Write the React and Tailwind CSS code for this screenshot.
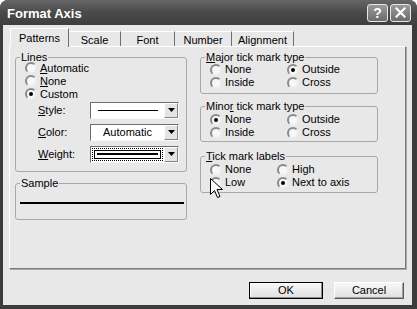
// App.jsx — Format Axis dialog (grayscale XP look)

const TABS = [
  { label: "Patterns", w: "w-[59px]", active: true },
  { label: "Scale", w: "w-[52px]" },
  { label: "Font", w: "w-[54px]" },
  { label: "Number", w: "w-[57px]" },
  { label: "Alignment", w: "w-[62px]" },
];

function Radio({ checked }) {
  return (
    <span className="w-[12px] h-[12px] rounded-full bg-[#f7f7f7] border-2 border-t-[#8a8a8a] border-l-[#8a8a8a] border-r-[#ececec] border-b-[#ececec] flex items-center justify-center shrink-0">
      {checked && <span className="w-[4px] h-[4px] rounded-full bg-black" />}
    </span>
  );
}

function Option({ checked, children, className = "" }) {
  return (
    <div className={`flex items-center gap-[3px] h-[13px] ${className}`}>
      <Radio checked={checked} />
      <span className="leading-[13px]">{children}</span>
    </div>
  );
}

function Group({ title, className = "", children }) {
  return (
    <fieldset className={`border border-[#a8a8a8] rounded-[3px] ${className}`}>
      <legend className="ml-[4px] px-[1px] leading-[13px]">{title}</legend>
      {children}
    </fieldset>
  );
}

function Dropdown({ children, focused }) {
  return (
    <div className="w-[89px] h-[17px] flex border border-t-[#6e6e6e] border-l-[#6e6e6e] border-r-[#fafafa] border-b-[#fafafa] bg-white">
      <div className="flex-1 flex items-center justify-center p-[1px]">
        <div
          className={`w-full h-full flex items-center justify-center ${
            focused ? "border border-dotted border-black p-[1px]" : ""
          }`}
        >
          {children}
        </div>
      </div>
      <div className="w-[14px] bg-[#e4e4e4] border border-t-[#fdfdfd] border-l-[#fdfdfd] border-r-[#858585] border-b-[#858585] flex items-center justify-center">
        <svg width="7" height="4" viewBox="0 0 7 4">
          <path d="M0 0h7L3.5 4z" fill="#000" />
        </svg>
      </div>
    </div>
  );
}

function TitleBar() {
  return (
    <div className="h-[25px] shrink-0 flex items-center pl-[7px] pr-[6px] bg-gradient-to-b from-[#666] via-[#4a4a4a] to-[#3e3e3e]">
      <span className="text-white font-bold text-[13px] leading-none mt-[1px]">Format Axis</span>
      <div className="ml-auto flex gap-[2px]">
        <div className="w-[21px] h-[18px] rounded-[3px] border border-[#e6e6e6] bg-gradient-to-b from-[#9a9a9a] to-[#6c6c6c] flex items-center justify-center text-white font-bold text-[14px] leading-none">
          ?
        </div>
        <div className="w-[21px] h-[18px] rounded-[3px] border border-[#e6e6e6] bg-gradient-to-b from-[#9a9a9a] to-[#6c6c6c] flex items-center justify-center">
          <svg width="11" height="11" viewBox="0 0 11 11">
            <path d="M1.5 1.5l8 8M9.5 1.5l-8 8" stroke="#fff" strokeWidth="2.2" strokeLinecap="square" />
          </svg>
        </div>
      </div>
    </div>
  );
}

function Cursor() {
  return (
    <svg
      className="absolute left-[207px] top-[153px]"
      width="13"
      height="21"
      viewBox="0 0 13 21"
    >
      <path
        d="M0.5 0.5v16l4-4 3 7 2.5-1-3-7h5.5z"
        fill="#fff"
        stroke="#000"
        strokeWidth="1"
        strokeLinejoin="miter"
      />
    </svg>
  );
}

export default function App() {
  return (
    <div className="w-[417px] h-[309px] bg-[#3c3c3c] rounded-t-[8px] flex flex-col overflow-hidden font-['Liberation_Sans',Arial,sans-serif] text-[11px] text-black">
      <TitleBar />

      <div className="flex-1 ml-[3px] mr-[5px] mb-[4px] bg-[#e8e8e8] flex flex-col relative">
        {/* ── Tabs ── */}
        <div className="flex items-end h-[18px] mt-[3px] pl-[7px]">
          {TABS.map((t) =>
            t.active ? (
              <div
                key={t.label}
                className={`${t.w} h-[19px] -mb-px relative z-10 bg-[#e8e8e8] border-t border-l border-t-white border-l-white border-r border-r-[#6e6e6e] flex items-center justify-center pt-[1px]`}
              >
                {t.label}
              </div>
            ) : (
              <div
                key={t.label}
                className={`${t.w} h-[15px] border-t border-t-white border-r border-r-[#6e6e6e] flex items-center justify-center pt-[2px]`}
              >
                {t.label}
              </div>
            )
          )}
        </div>

        {/* ── Panel ── */}
        <div className="ml-[6px] w-[397px] h-[223px] border border-t-white border-l-white border-r-[#7c7c7c] border-b-[#7c7c7c] shadow-[1px_1px_0_#a8a8a8] flex pt-[4px] pl-[5px]">
          {/* left column */}
          <div className="w-[172px] flex flex-col">
            <Group title="Lines" className="h-[121px]">
              <div className="-mt-[2.5px] pl-[9px] flex flex-col">
                <Option className="h-[13.5px]"><u>A</u>utomatic</Option>
                <Option className="h-[13.5px]"><u>N</u>one</Option>
                <Option checked className="h-[13.5px]">Custom</Option>
              </div>
              <div className="mt-[1px] pl-[22px] flex flex-col gap-[5px]">
                <div className="flex items-center h-[17px]">
                  <span className="w-[52px]"><u>S</u>tyle:</span>
                  <Dropdown>
                    <div className="w-[60px] h-px bg-black" />
                  </Dropdown>
                </div>
                <div className="flex items-center h-[17px]">
                  <span className="w-[52px]"><u>C</u>olor:</span>
                  <Dropdown>
                    <span className="leading-none">Automatic</span>
                  </Dropdown>
                </div>
                <div className="flex items-center h-[17px]">
                  <span className="w-[52px]"><u>W</u>eight:</span>
                  <Dropdown focused>
                    <div className="w-full h-full border border-black flex items-center px-[2px]">
                      <div className="w-full h-[2px] bg-black" />
                    </div>
                  </Dropdown>
                </div>
              </div>
            </Group>

            <Group title="Sample" className="mt-[5px] h-[43px]">
              <div className="mt-[12px] ml-[4px] w-[164px] h-[2px] bg-black" />
            </Group>
          </div>

          {/* right column */}
          <div className="w-[178px] ml-[13px] flex flex-col">
            <Group title={<><u>M</u>ajor tick mark type</>} className="h-[43px]">
              <div className="-mt-[1px] pl-[9px] grid grid-cols-[77px_1fr]">
                <Option>None</Option>
                <Option checked>Outside</Option>
                <Option>Inside</Option>
                <Option>Cross</Option>
              </div>
            </Group>

            <Group title={<>Mino<u>r</u> tick mark type</>} className="mt-[6px] h-[42px]">
              <div className="pl-[9px] grid grid-cols-[77px_1fr]">
                <Option checked>None</Option>
                <Option>Outside</Option>
                <Option>Inside</Option>
                <Option>Cross</Option>
              </div>
            </Group>

            <Group title={<><u>T</u>ick mark labels</>} className="mt-[8px] h-[43px]">
              <div className="pl-[9px] grid grid-cols-[67px_1fr]">
                <Option>None</Option>
                <Option>High</Option>
                <Option>Low</Option>
                <Option checked>Next to axis</Option>
              </div>
            </Group>
          </div>
        </div>

        {/* ── Buttons ── */}
        <div className="flex justify-end gap-[11px] pr-[8px] mt-[13px]">
          <button className="w-[74px] h-[17px] border border-black bg-gradient-to-b from-[#f8f8f8] to-[#e0e0e0] shadow-[inset_-1px_-1px_0_#8a8a8a,inset_1px_1px_0_#fff] leading-none">
            OK
          </button>
          <button className="w-[70px] h-[17px] border border-t-white border-l-white border-r-[#5a5a5a] border-b-[#5a5a5a] bg-gradient-to-b from-[#f8f8f8] to-[#e0e0e0] shadow-[inset_-1px_-1px_0_#a0a0a0] leading-none">
            Cancel
          </button>
        </div>

        <Cursor />
      </div>
    </div>
  );
}
